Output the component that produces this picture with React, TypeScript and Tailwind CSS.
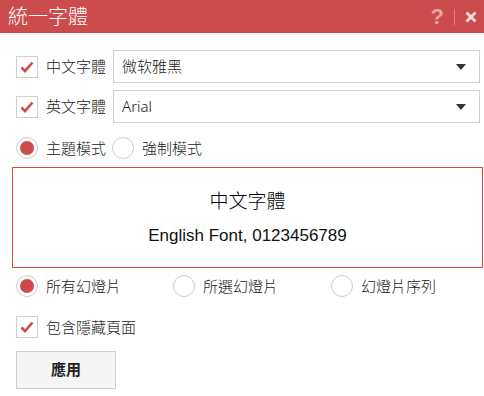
import React, { useState } from 'react';

const font = { fontFamily: '"Noto Sans", "Noto Sans CJK TC", sans-serif' };

const CheckBox = ({ checked, label, onToggle }: { checked: boolean; label: string; onToggle: () => void }) => (
  <label className="flex items-center gap-[8px] cursor-pointer" onClick={onToggle}>
    <span className="w-[22px] h-[22px] border border-[#cfcfcf] bg-white flex items-center justify-center">
      {checked && (
        <svg width="14" height="12" viewBox="0 0 14 12">
          <path d="M1.5 6.5 L5 10 L12.5 1.5" fill="none" stroke="#cc4b4c" strokeWidth="2.6" />
        </svg>
      )}
    </span>
    <span className="text-[15px] text-[#222] font-light">{label}</span>
  </label>
);

const Radio = ({ checked, label, onSelect }: { checked: boolean; label: string; onSelect: () => void }) => (
  <label className="flex items-center gap-[8px] cursor-pointer" onClick={onSelect}>
    <span className="w-[22px] h-[22px] rounded-full border border-[#cfcfcf] bg-white flex items-center justify-center">
      {checked && <span className="w-[14px] h-[14px] rounded-full bg-[#cc4b4c]" />}
    </span>
    <span className="text-[15px] text-[#222] font-light">{label}</span>
  </label>
);

const Select = ({ value }: { value: string }) => (
  <div className="flex-1 h-[33px] border border-[#cfcfcf] bg-white flex items-center justify-between pl-[8px] pr-[13px]">
    <span className="text-[15px] text-[#222] font-light">{value}</span>
    <svg width="10" height="6" viewBox="0 0 10 6">
      <path d="M0 0 H10 L5 6 Z" fill="#333" />
    </svg>
  </div>
);

export default function App() {
  const [cn, setCn] = useState(true);
  const [en, setEn] = useState(true);
  const [mode, setMode] = useState('theme');
  const [scope, setScope] = useState('all');
  const [hidden, setHidden] = useState(true);

  return (
    <div className="w-[484px] h-[396px] bg-white overflow-hidden" style={font}>
      <div className="h-[33px] bg-[#cc4b4c] flex items-center pl-[8px] pr-[5px]">
        <span className="text-[20px] text-white font-light flex-1 leading-none">統一字體</span>
        <span className="text-[22px] font-bold text-white/50 leading-none" style={{ fontFamily: '"Liberation Sans", sans-serif' }}>?</span>
        <span className="w-px h-[16px] bg-white/30 mx-[10px]" />
        <svg width="12" height="12" viewBox="0 0 12 12" className="mr-[2px]">
          <path d="M1.5 1.5 L10.5 10.5 M10.5 1.5 L1.5 10.5" stroke="#f3d3d3" strokeWidth="3" />
        </svg>
      </div>

      <div className="pl-[16px] pr-[4px]">
        <div className="flex items-center gap-[7px] mt-[17px]">
          <CheckBox checked={cn} label="中文字體" onToggle={() => setCn(!cn)} />
          <Select value="微软雅黑" />
        </div>
        <div className="flex items-center gap-[7px] mt-[7px]">
          <CheckBox checked={en} label="英文字體" onToggle={() => setEn(!en)} />
          <Select value="Arial" />
        </div>
        <div className="flex items-center gap-[6px] mt-[14px]">
          <Radio checked={mode === 'theme'} label="主題模式" onSelect={() => setMode('theme')} />
          <Radio checked={mode === 'force'} label="強制模式" onSelect={() => setMode('force')} />
        </div>
      </div>

      <div className="ml-[12px] mr-[1px] mt-[7px] h-[101px] border border-[#d9474a] flex flex-col items-center justify-center">
        <div className="text-[19px] text-black font-light leading-none" style={{ fontFamily: '"Noto Sans CJK TC", sans-serif' }}>中文字體</div>
        <div className="text-[17px] text-[#111] mt-[18px] leading-none" style={{ fontFamily: '"Liberation Sans", sans-serif' }}>
          English Font, 0123456789
        </div>
      </div>

      <div className="pl-[16px]">
        <div className="grid grid-cols-[157px_158px_1fr] mt-[7px]">
          <Radio checked={scope === 'all'} label="所有幻燈片" onSelect={() => setScope('all')} />
          <Radio checked={scope === 'sel'} label="所選幻燈片" onSelect={() => setScope('sel')} />
          <Radio checked={scope === 'seq'} label="幻燈片序列" onSelect={() => setScope('seq')} />
        </div>
        <div className="mt-[19px]">
          <CheckBox checked={hidden} label="包含隱藏頁面" onToggle={() => setHidden(!hidden)} />
        </div>
        <button className="mt-[12px] w-[100px] h-[38px] bg-[#f5f5f5] border border-[#cfcfcf] text-[15px] font-bold text-[#222]">
          應用
        </button>
      </div>
    </div>
  );
}
